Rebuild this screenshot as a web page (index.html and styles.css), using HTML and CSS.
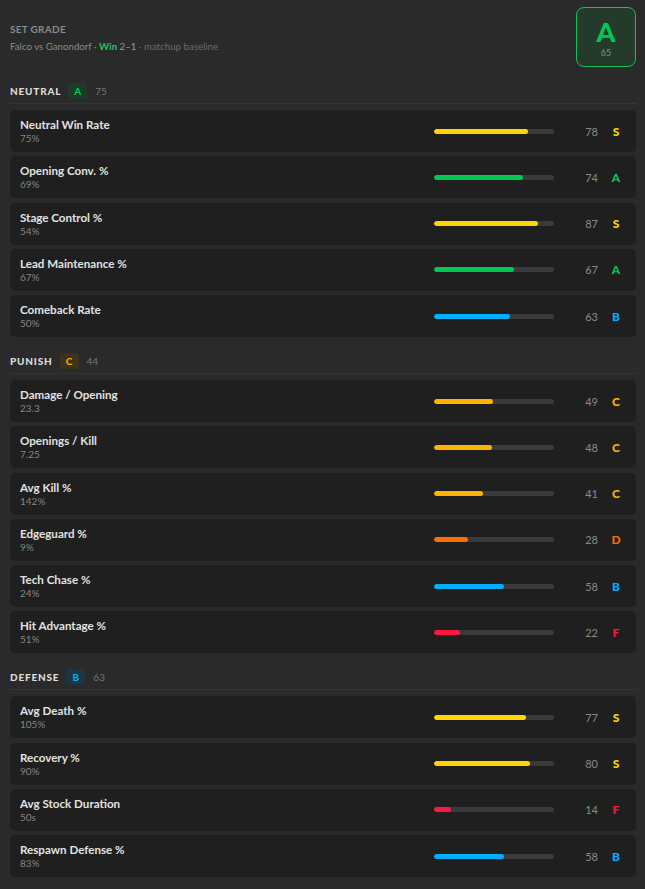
FILE: index.html
```html
<!DOCTYPE html>
<html>
<head>
<meta charset="utf-8">
<link rel="stylesheet" href="styles.css">
</head>
<body>
<div class="page">
  <header class="top">
    <div class="top-text">
      <div class="eyebrow">SET GRADE</div>
      <div class="subtitle">Falco vs Ganondorf · <span class="win">Win</span> <span class="score">2–1</span> <span class="dim">· matchup baseline</span></div>
    </div>
    <div class="overall">
      <div class="overall-letter">A</div>
      <div class="overall-num">65</div>
    </div>
  </header>

  <section class="section">
    <div class="sec-head">
      <span class="sec-title">NEUTRAL</span>
      <span class="pill pill-a">A</span>
      <span class="sec-num">75</span>
    </div>
    <div class="rows">
      <div class="row"><div class="label"><div class="name">Neutral Win Rate</div><div class="val">75%</div></div><div class="bar"><div class="fill c-s" style="width:78%"></div></div><div class="score-num">78</div><div class="grade t-s">S</div></div>
      <div class="row"><div class="label"><div class="name">Opening Conv. %</div><div class="val">69%</div></div><div class="bar"><div class="fill c-a" style="width:74%"></div></div><div class="score-num">74</div><div class="grade t-a">A</div></div>
      <div class="row"><div class="label"><div class="name">Stage Control %</div><div class="val">54%</div></div><div class="bar"><div class="fill c-s" style="width:87%"></div></div><div class="score-num">87</div><div class="grade t-s">S</div></div>
      <div class="row"><div class="label"><div class="name">Lead Maintenance %</div><div class="val">67%</div></div><div class="bar"><div class="fill c-a" style="width:67%"></div></div><div class="score-num">67</div><div class="grade t-a">A</div></div>
      <div class="row"><div class="label"><div class="name">Comeback Rate</div><div class="val">50%</div></div><div class="bar"><div class="fill c-b" style="width:63%"></div></div><div class="score-num">63</div><div class="grade t-b">B</div></div>
    </div>
  </section>

  <section class="section">
    <div class="sec-head">
      <span class="sec-title">PUNISH</span>
      <span class="pill pill-c">C</span>
      <span class="sec-num">44</span>
    </div>
    <div class="rows">
      <div class="row"><div class="label"><div class="name">Damage / Opening</div><div class="val">23.3</div></div><div class="bar"><div class="fill c-c" style="width:49%"></div></div><div class="score-num">49</div><div class="grade t-c">C</div></div>
      <div class="row"><div class="label"><div class="name">Openings / Kill</div><div class="val">7.25</div></div><div class="bar"><div class="fill c-c" style="width:48%"></div></div><div class="score-num">48</div><div class="grade t-c">C</div></div>
      <div class="row"><div class="label"><div class="name">Avg Kill %</div><div class="val">142%</div></div><div class="bar"><div class="fill c-c" style="width:41%"></div></div><div class="score-num">41</div><div class="grade t-c">C</div></div>
      <div class="row"><div class="label"><div class="name">Edgeguard %</div><div class="val">9%</div></div><div class="bar"><div class="fill c-d" style="width:28%"></div></div><div class="score-num">28</div><div class="grade t-d">D</div></div>
      <div class="row"><div class="label"><div class="name">Tech Chase %</div><div class="val">24%</div></div><div class="bar"><div class="fill c-b" style="width:58%"></div></div><div class="score-num">58</div><div class="grade t-b">B</div></div>
      <div class="row"><div class="label"><div class="name">Hit Advantage %</div><div class="val">51%</div></div><div class="bar"><div class="fill c-f" style="width:22%"></div></div><div class="score-num">22</div><div class="grade t-f">F</div></div>
    </div>
  </section>

  <section class="section">
    <div class="sec-head">
      <span class="sec-title">DEFENSE</span>
      <span class="pill pill-b">B</span>
      <span class="sec-num">63</span>
    </div>
    <div class="rows">
      <div class="row"><div class="label"><div class="name">Avg Death %</div><div class="val">105%</div></div><div class="bar"><div class="fill c-s" style="width:77%"></div></div><div class="score-num">77</div><div class="grade t-s">S</div></div>
      <div class="row"><div class="label"><div class="name">Recovery %</div><div class="val">90%</div></div><div class="bar"><div class="fill c-s" style="width:80%"></div></div><div class="score-num">80</div><div class="grade t-s">S</div></div>
      <div class="row"><div class="label"><div class="name">Avg Stock Duration</div><div class="val">50s</div></div><div class="bar"><div class="fill c-f" style="width:14%"></div></div><div class="score-num">14</div><div class="grade t-f">F</div></div>
      <div class="row"><div class="label"><div class="name">Respawn Defense %</div><div class="val">83%</div></div><div class="bar"><div class="fill c-b" style="width:58%"></div></div><div class="score-num">58</div><div class="grade t-b">B</div></div>
    </div>
  </section>
</div>
</body>
</html>
```

FILE: styles.css
```css
html, body {
  margin: 0;
  padding: 0;
  background: #2a2a2a;
}
body {
  font-family: Lato, "Noto Sans", sans-serif;
  color: #e0e0e0;
}
.page {
  padding: 7px 9px 11px 10px;
}
.top {
  display: flex;
  align-items: center;
  justify-content: space-between;
}
.top-text {
  display: flex;
  flex-direction: column;
  gap: 4px;
  padding-top: 1px;
}
.eyebrow {
  font-size: 10px;
  line-height: 13px;
  font-weight: 700;
  letter-spacing: 0.3px;
  color: #8a8a8a;
}
.subtitle {
  font-size: 9.7px;
  line-height: 13px;
  color: #8a8a8a;
}
.subtitle .win {
  color: #22c55e;
  font-weight: 700;
}
.subtitle .score {
  color: #9a9a9a;
}
.subtitle .dim {
  color: #6a6a6a;
}
.overall {
  box-sizing: border-box;
  width: 60px;
  height: 60px;
  border: 1.5px solid #16c15a;
  border-radius: 8px;
  background: #243a2b;
  display: flex;
  flex-direction: column;
  align-items: center;
  padding-top: 9px;
}
.overall-letter {
  font-size: 27px;
  line-height: 30px;
  font-weight: 900;
  color: #00c853;
}
.overall-num {
  font-size: 9px;
  line-height: 11px;
  color: #8a8a8a;
}
.section {
  margin-top: 16px;
}
.sec-head {
  display: flex;
  align-items: center;
  height: 16px;
  padding-bottom: 4px;
  border-bottom: 1px solid #353535;
  margin-bottom: 6px;
}
.sec-title {
  font-size: 10px;
  font-weight: 900;
  letter-spacing: 0.8px;
  color: #dcdcdc;
}
.pill {
  width: 19px;
  height: 16px;
  border-radius: 3px;
  margin-left: 7px;
  display: flex;
  align-items: center;
  justify-content: center;
  font-size: 10px;
  font-weight: 700;
}
.pill-a { background: #1e3b28; color: #00c853; }
.pill-c { background: #3b3220; color: #ffb300; }
.pill-b { background: #1c3542; color: #00b0ff; }
.sec-num {
  margin-left: 8px;
  font-size: 10px;
  color: #777;
}
.rows {
  display: flex;
  flex-direction: column;
  gap: 4.25px;
}
.row {
  display: flex;
  align-items: center;
  background: #1f1f1f;
  border-radius: 5px;
  padding: 7px 10px 7px 10px;
}
.label {
  flex: 1;
}
.name {
  font-size: 11.6px;
  line-height: 15px;
  font-weight: 700;
  color: #e2e2e2;
}
.val {
  font-size: 10px;
  line-height: 13px;
  color: #858585;
}
.bar {
  width: 120px;
  height: 5px;
  border-radius: 3px;
  background: #3a3a3a;
  overflow: hidden;
}
.fill {
  height: 100%;
  border-radius: 3px;
}
.score-num {
  width: 30px;
  margin-left: 14px;
  text-align: right;
  font-size: 11px;
  color: #8a8a8a;
}
.grade {
  width: 20px;
  margin-left: 8px;
  text-align: center;
  font-size: 12px;
  font-weight: 900;
}
.c-s { background: #ffd600; }
.c-a { background: #00c853; }
.c-b { background: #00b0ff; }
.c-c { background: #ffb300; }
.c-d { background: #ff6d00; }
.c-f { background: #ff1744; }
.t-s { color: #ffd600; }
.t-a { color: #00c853; }
.t-b { color: #00b0ff; }
.t-c { color: #ffb300; }
.t-d { color: #ff6d00; }
.t-f { color: #ff1744; }
```
